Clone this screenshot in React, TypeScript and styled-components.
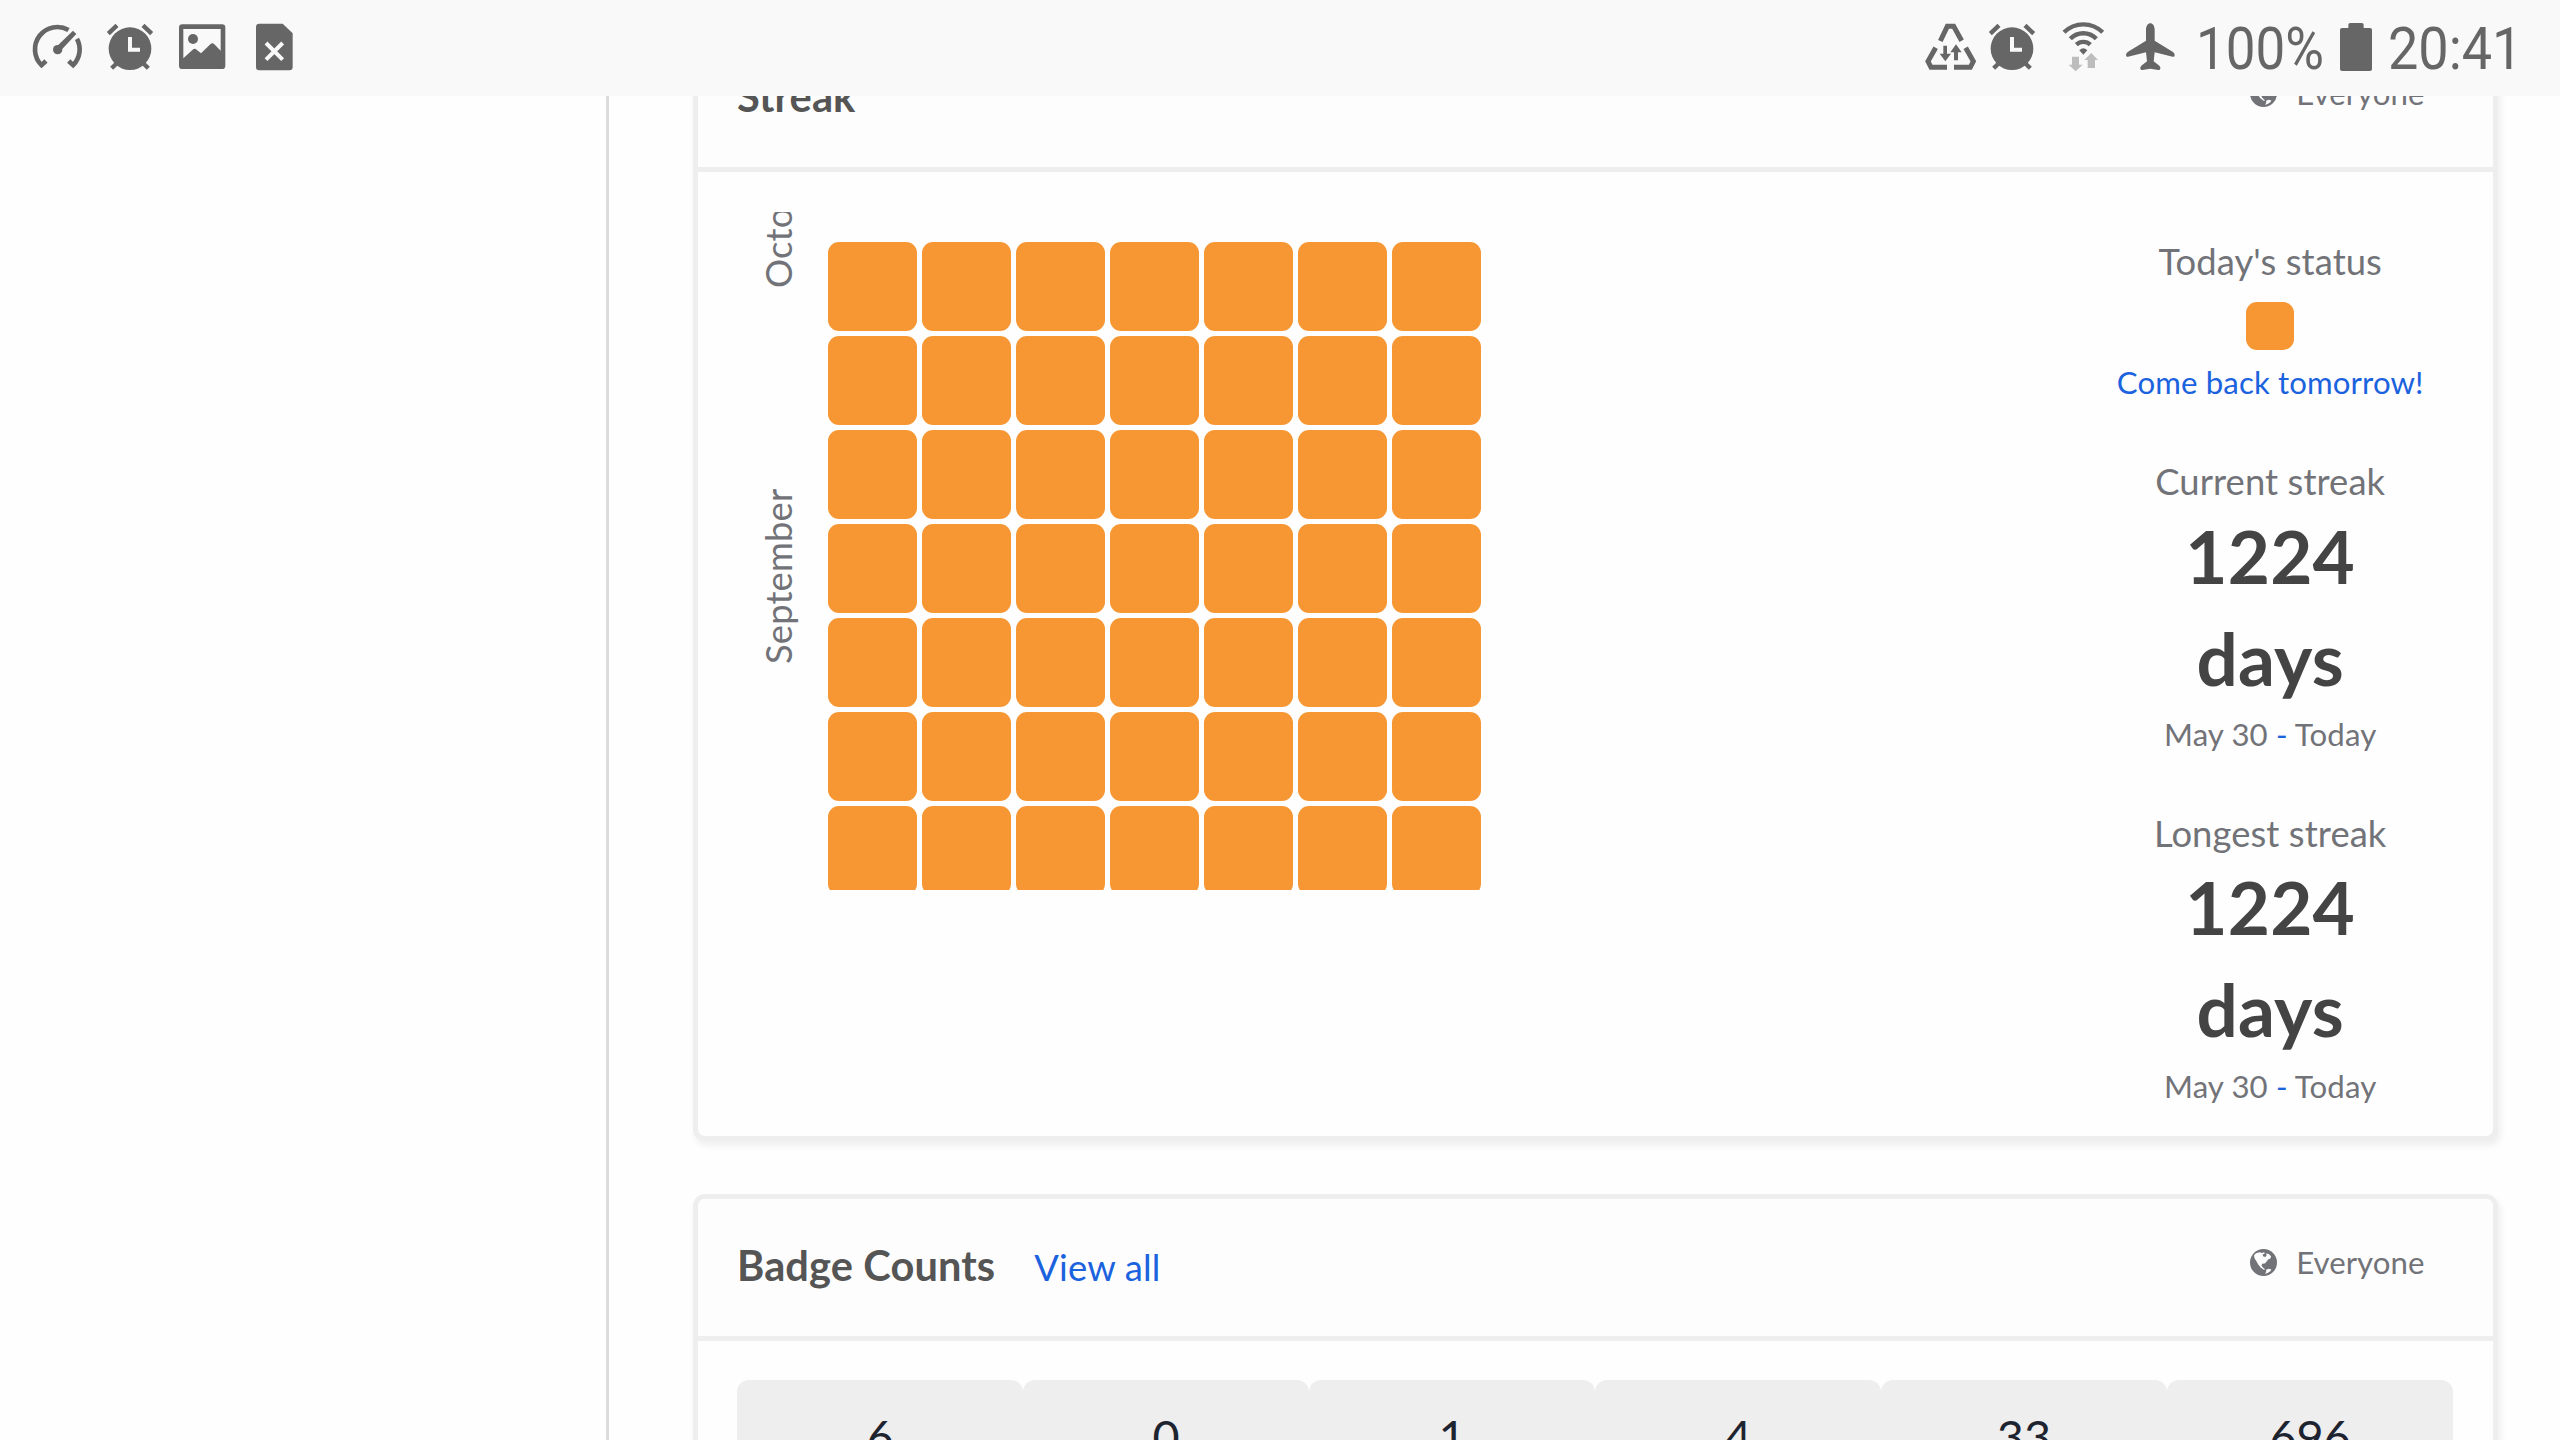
import React from "react";
import styled, { createGlobalStyle } from "styled-components";

const ink = "#666666";
const muted = "#727378";
const link = "#1b62de";
const line = "#eeeeee";
const orange = "#f79733";

const GlobalStyle = createGlobalStyle`
  * { box-sizing: border-box; }
  html, body { margin: 0; padding: 0; background: #fefefe; }
  body { overflow: hidden; font-family: Lato, "Liberation Sans", sans-serif; }
`;

const Screen = styled.div`
  display: flex;
  flex-direction: column;
  width: 2560px;
  height: 1440px;
  overflow: hidden;
`;

const StatusBar = styled.header`
  display: flex;
  justify-content: space-between;
  flex: none;
  height: 96px;
  padding: 22px 48px 24px 32px;
  background: #f9f9f9;
`;

const StatusGroup = styled.div`
  display: flex;
  align-items: center;
`;

const Glyph = styled.svg<{ $w: number; $gap?: number }>`
  display: block;
  flex: none;
  width: ${(p) => p.$w}px;
  height: 50px;
  margin-left: ${(p) => p.$gap ?? 0}px;
  overflow: visible;
  fill: ${ink};
`;

const StatusText = styled.span<{ $w: number; $gap: number; $scale: number }>`
  flex: none;
  width: ${(p) => p.$w}px;
  margin-left: ${(p) => p.$gap}px;
  font: 400 60px/50px Roboto, sans-serif;
  color: ${ink};
  white-space: nowrap;
  transform: translateY(2px) scaleX(${(p) => p.$scale});
  transform-origin: 0 50%;
`;

const Content = styled.div`
  display: grid;
  grid-template-columns: 609px 1fr;
  flex: none;
  height: 1344px;
  overflow: hidden;
`;

const Sidebar = styled.aside`
  border-right: 3px solid #dcdcdc;
`;

const Main = styled.main`
  display: flex;
  flex-direction: column;
  gap: 53px;
  margin-top: -71px;
  padding: 0 62.7px 0 83.5px;
`;

const Card = styled.section<{ $h: number }>`
  flex: none;
  height: ${(p) => p.$h}px;
  border: 5px solid ${line};
  border-radius: 12px;
  background: #fefefe;
  box-shadow: 2.6px 5px 6px rgba(0, 0, 0, 0.06);
`;

const CardHeader = styled.div`
  display: flex;
  justify-content: space-between;
  height: 142px;
  padding: 0 68px 0 39.5px;
  border-bottom: 5px solid ${line};
  border-radius: 7px 7px 0 0;
  background: #fdfdfd;
`;

const Heading = styled.div`
  display: flex;
  align-items: center;
  padding-bottom: 5px;
`;

const Title = styled.h2`
  margin: 0;
  font-size: 41.6px;
  line-height: 58px;
  font-weight: 700;
  letter-spacing: 0.1px;
  color: #555555;
`;

const HeaderLink = styled.a`
  margin-left: 39px;
  padding-top: 4px;
  font-size: 36.4px;
  line-height: 58px;
  letter-spacing: 0.2px;
  color: ${link};
`;

const Audience = styled.div`
  display: flex;
  align-items: center;
  gap: 19.5px;
  padding-bottom: 12px;
  font-size: 31.2px;
  line-height: 44px;
  letter-spacing: 0.05px;
  color: ${muted};
`;

const Globe = styled.svg`
  display: block;
  width: 27px;
  height: 27px;
  margin-top: 1px;
`;

const StreakBody = styled.div`
  display: flex;
  justify-content: space-between;
  padding: 40px 62.3px 0 39.5px;
`;

const Calendar = styled.div`
  display: flex;
  height: 678px;
  overflow: hidden;
`;

const Months = styled.div`
  display: flex;
  flex-direction: column;
  width: 91px;
  padding-left: 15.5px;
`;

const Month = styled.div<{ $h: number }>`
  flex: 0 0 ${(p) => p.$h}px;
  width: 51px;
  height: ${(p) => p.$h}px;
  writing-mode: vertical-rl;
  transform: rotate(180deg);
  font-size: 36.4px;
  line-height: 51px;
  letter-spacing: 0.15px;
  color: ${muted};
  white-space: nowrap;
`;

const Days = styled.div`
  display: grid;
  grid-template-columns: repeat(7, 89px);
  grid-auto-rows: 89px;
  gap: 5px;
  padding-top: 30.4px;
`;

const Day = styled.div`
  border-radius: 11px;
  background: ${orange};
`;

const Stats = styled.div`
  display: flex;
  flex-direction: column;
  align-items: center;
  width: 320px;
  padding-top: 24px;
  text-align: center;
`;

const Label = styled.div`
  font-size: 36.4px;
  line-height: 51px;
  letter-spacing: 0.08px;
  color: ${muted};
`;

const Today = styled(Day)`
  width: 47.5px;
  height: 47.5px;
  margin: 15px 0 11.6px;
`;

const Note = styled.div<{ $tone?: string }>`
  margin-bottom: 51.4px;
  font-size: 31.2px;
  line-height: 43.7px;
  letter-spacing: 0.12px;
  color: ${(p) => p.$tone ?? muted};
`;

const Dash = styled.span`
  color: ${link};
`;

const Big = styled.div`
  width: 200px;
  margin: -2.6px 0 4.3px;
  font-size: 72.8px;
  line-height: 102px;
  font-weight: 700;
  letter-spacing: 0.2px;
  color: #444444;
`;

const Badges = styled.div`
  display: grid;
  grid-template-columns: repeat(6, 286px);
  padding: 39px 39.5px;
`;

const Badge = styled.div`
  height: 200px;
  padding-top: 28px;
  border-radius: 12px;
  background: #eeeeee;
  color: #1e2330;
  font-size: 46.8px;
  line-height: 56px;
  text-align: center;
`;

const AlarmIcon = ({ gap }: { gap: number }) => (
  <Glyph $w={48} $gap={gap} viewBox="318 66 144 150">
    <circle cx="390" cy="146" r="64" />
    <path
      d="M325 101L351 76M429 76L455 101M352 188L335 205M428 188L445 205"
      stroke={ink}
      strokeWidth="13"
    />
    <path d="M390 111V149H420" fill="none" stroke="#f9f9f9" strokeWidth="12" />
  </Glyph>
);

const Visibility = () => (
  <Audience>
    <Globe viewBox="449 87 82 82">
      <circle cx="490" cy="128" r="41" fill={muted} />
      <path
        d="M461 107L467 100L478 97L486 99L491 97L495 100L488 104L488 109L496 111L499 107L498 101L506 102L513 109L511 116L504 119L499 126L494 131L486 132L484 137L488 143L494 148L492 151L482 144L474 134L469 125L463 116Z"
        fill="#fdfdfd"
      />
      <path d="M498 150L506 147L514 149L510 155L501 161L495 162L498 156Z" fill="#fdfdfd" />
    </Globe>
    Everyone
  </Audience>
);

const Streak = ({ label }: { label: string }) => (
  <>
    <Label>{label}</Label>
    <Big>1224 days</Big>
    <Note>
      May 30 <Dash>-</Dash> Today
    </Note>
  </>
);

const days = Array.from({ length: 49 }, (_, i) => i);
const badges = [6, 0, 1, 4, 33, 696];

export default function App() {
  return (
    <Screen>
      <GlobalStyle />
      <StatusBar>
        <StatusGroup>
          <Glyph $w={52} viewBox="96 66 156 150">
            <path
              d="M138 183L124.6 195.4A67 67 0 0 1 205.5 90M231 116.5A67 67 0 0 1 219.4 195.4L206 183"
              fill="none"
              stroke={ink}
              strokeWidth="14"
            />
            <circle cx="173" cy="149" r="14" />
            <path d="M166 143L219 92L229 102L179 155Z" />
          </Glyph>
          <AlarmIcon gap={22} />
          <Glyph $w={48} $gap={24} viewBox="534 66 144 150">
            <path
              fillRule="evenodd"
              d="M547 73H666Q676 73 676 83V197Q676 207 666 207H547Q537 207 537 197V83Q537 73 547 73ZM550 87V175L578 149Q584 144 590 149L603 160L631 133Q637 127 643 133L662 152V87Z"
            />
            <circle cx="579" cy="117" r="15" />
          </Glyph>
          <Glyph $w={38} $gap={29} viewBox="765 66 114 150">
            <path d="M778 71H848L878 100V201Q878 211 868 211H778Q768 211 768 201V81Q768 71 778 71Z" />
            <path d="M798 129L848 179M848 129L798 179" stroke="#f9f9f9" strokeWidth="12" />
          </Glyph>
        </StatusGroup>
        <StatusGroup>
          <Glyph $w={52} viewBox="75 66 156 150">
            <path
              d="M121 123L142 79H161L185 122M107 143L84 184L93 202H141M197 143L220 184L211 202H162"
              fill="none"
              stroke={ink}
              strokeWidth="15"
            />
            <path d="M130 137H141V161H153L136 184L119 161H130ZM162 181V157H151L168 133L185 157H174V181Z" />
          </Glyph>
          <AlarmIcon gap={10.5} />
          <Glyph $w={43} $gap={26.5} viewBox="486 66 129 150">
            <path
              d="M492 97A82 82 0 0 1 608 97M511 116A55 55 0 0 1 589 116M529 134A30 30 0 0 1 571 134"
              fill="none"
              stroke={ink}
              strokeWidth="13"
            />
            <path d="M538 151Q550 139 562 151L550 164Z" />
            <path
              d="M516 170H537V194H548L527 214L506 194H516ZM563 204V180H553L574 159L594 180H585V204Z"
              fill="#bdbdbd"
            />
          </Glyph>
          <Glyph $w={51} $gap={20} viewBox="675 66 153 150">
            <path d="M751 70C744 70 738 78 738 90V122L683 156Q677 161 678 166Q679 172 684 170L738 157L741 184L724 197Q720 201 721 206Q722 211 727 210L751 206L775 210Q780 211 781 206Q782 201 778 197L761 184L764 157L818 170Q823 172 824 166Q825 161 819 156L764 122V90C764 78 758 70 751 70Z" />
          </Glyph>
          <StatusText $w={142} $gap={20} $scale={0.882}>
            100%
          </StatusText>
          <Glyph $w={32} $gap={2} viewBox="480 66 96 150">
            <rect x="480" y="84" width="96" height="129" rx="6" />
            <rect x="505" y="69" width="46" height="30" rx="6" />
          </Glyph>
          <StatusText $w={124} $gap={16} $scale={0.9}>
            20:41
          </StatusText>
        </StatusGroup>
      </StatusBar>
      <Content>
        <Sidebar />
        <Main>
          <Card $h={1116}>
            <CardHeader>
              <Heading>
                <Title>Streak</Title>
              </Heading>
              <Visibility />
            </CardHeader>
            <StreakBody>
              <Calendar>
                <Months>
                  <Month $h={76}>October</Month>
                  <Month $h={376}>September</Month>
                </Months>
                <Days>
                  {days.map((d) => (
                    <Day key={d} />
                  ))}
                </Days>
              </Calendar>
              <Stats>
                <Label>Today's status</Label>
                <Today />
                <Note $tone={link}>Come back tomorrow!</Note>
                <Streak label="Current streak" />
                <Streak label="Longest streak" />
              </Stats>
            </StreakBody>
          </Card>
          <Card $h={500}>
            <CardHeader>
              <Heading>
                <Title>Badge Counts</Title>
                <HeaderLink>View all</HeaderLink>
              </Heading>
              <Visibility />
            </CardHeader>
            <Badges>
              {badges.map((b) => (
                <Badge key={b}>{b}</Badge>
              ))}
            </Badges>
          </Card>
        </Main>
      </Content>
    </Screen>
  );
}
